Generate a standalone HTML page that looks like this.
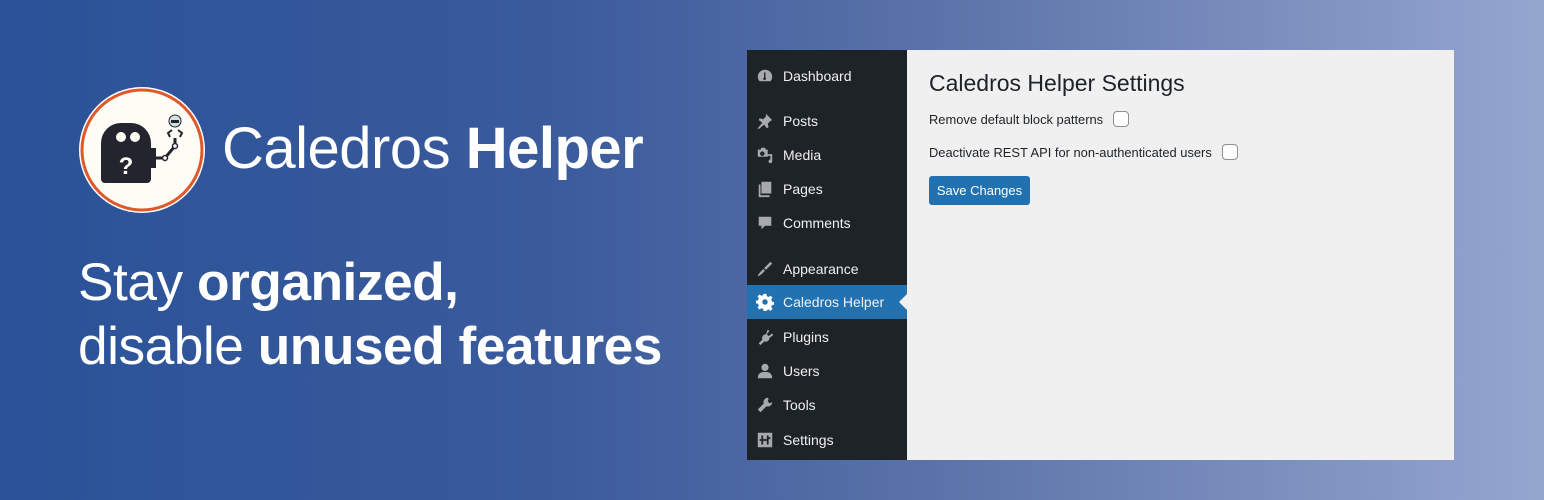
<!DOCTYPE html>
<html><head><meta charset="utf-8"><style>
*{margin:0;padding:0;box-sizing:border-box}
body{width:1544px;height:500px;overflow:hidden;font-family:"Liberation Sans",sans-serif;background:linear-gradient(90deg,#2a5298 0%,#3a5a9c 35%,#5a72a8 60%,#95a6cf 100%);position:relative;color:#fff}
.abs{position:absolute}
.title{left:222px;top:115px;font-size:58px;font-weight:300;letter-spacing:-0.5px;white-space:nowrap}
.tag{left:78px;top:251px;font-size:53.3px;line-height:64px;font-weight:300;letter-spacing:-0.5px;white-space:nowrap}
b{font-weight:700}
.wp{left:747px;top:50px;width:707px;height:410px;background:#f0f0f1}
.side{position:absolute;left:0;top:0;width:160px;height:410px;background:#1d2327}
.item{position:absolute;left:0;width:160px;height:34px;font-family:"Liberation Sans",sans-serif;font-size:14px;color:#f0f0f1;line-height:34px;padding-left:36px}
.item svg{position:absolute;left:9px;top:8px;width:18px;height:18px;fill:#a7aaad}
.act{background:#2271b1}
.act svg{fill:#fff}
.act:after{content:"";position:absolute;right:0;top:9px;border:8px solid transparent;border-right-color:#f0f0f1}
.main{position:absolute;left:182px;top:0;color:#1d2327}
h1{font-size:23px;font-weight:400;position:absolute;top:20px;left:0;white-space:nowrap}
.row{position:absolute;left:0;font-size:12.9px;white-space:nowrap;display:flex;align-items:center}
.cb{width:16px;height:16px;border:1px solid #8c8f94;border-radius:4px;background:#fff;margin-left:10px}
.btn{position:absolute;left:0;top:126px;width:101px;height:29px;background:#2271b1;border-radius:3px;color:#fff;font-size:13px;text-align:center;line-height:29px}
</style></head><body>
<svg class="abs" style="left:77px;top:85px" width="130" height="130" viewBox="0 0 130 130">
<circle cx="65" cy="65" r="63" fill="#fff"/>
<circle cx="65" cy="65" r="60" fill="#fdfdf6" stroke="#e0572a" stroke-width="3"/>
<path d="M24 70 V58 a20 20 0 0 1 20 -20 h10 a20 20 0 0 1 20 20 V70 Z" fill="#23242e"/>
<circle cx="44" cy="52" r="5" fill="#fdfdf6"/><circle cx="58" cy="52" r="5" fill="#fdfdf6"/>
<path d="M24 62 h50 v32 a4 4 0 0 1 -4 4 h-42 a4 4 0 0 1 -4 -4 Z" fill="#23242e"/>
<text x="49" y="89" font-size="24" font-weight="700" fill="#fdfdf6" text-anchor="middle" font-family="Liberation Sans">?</text>
<rect x="74" y="63" width="5" height="20" fill="#23242e"/>
<path d="M79 73 h9 l10 -12 v-8" stroke="#23242e" stroke-width="3" fill="none"/>
<circle cx="88" cy="73" r="2.5" fill="#fff" stroke="#23242e" stroke-width="1.5"/>
<circle cx="98" cy="61" r="2.5" fill="#fff" stroke="#23242e" stroke-width="1.5"/>
<path d="M93 52 l-2 -4 l4 -3 M103 52 l2 -4 l-4 -3" stroke="#23242e" stroke-width="2" fill="none"/>
<circle cx="98" cy="36" r="6" fill="#cfe3dc" stroke="#23242e" stroke-width="1"/>
<rect x="94" y="35" width="8" height="3" fill="#23242e"/>
</svg>
<div class="abs title">Caledros <b>Helper</b></div>
<div class="abs tag">Stay <b>organized,</b><br>disable <b>unused features</b></div>
<div class="abs wp">
<div class="side">
<div class="item" style="top:9px"><svg viewBox="0 0 20 20"><path d="M10 3a8 8 0 0 0-8 8c0 2 .8 3.6 2 4.8h12c1.2-1.2 2-2.8 2-4.8a8 8 0 0 0-8-8zm1 10a1.5 1.5 0 1 1-2-1.4V6h1.5v5.6A1.5 1.5 0 0 1 11 13z"/></svg>Dashboard</div>
<div class="item" style="top:54px"><svg viewBox="0 0 20 20"><path d="M11 2l7 7-2 1-3 3 1 4-2 1-3-4-6 5-1-1 5-6-4-3 1-2 4 1 3-3z"/></svg>Posts</div>
<div class="item" style="top:88px"><svg viewBox="0 0 20 20"><path d="M2 4h3l1-2h4l1 2h2v8H2zM7 6a2.5 2.5 0 1 0 .01 0zM13 9h5v8a2 2 0 1 1-2-2V11h-3z"/></svg>Media</div>
<div class="item" style="top:122px"><svg viewBox="0 0 20 20"><path d="M6 2h11v13H6zM3 5h2v12h10v2H3z"/></svg>Pages</div>
<div class="item" style="top:156px"><svg viewBox="0 0 20 20"><path d="M3 3h14v10H10l-4 4v-4H3z"/></svg>Comments</div>
<div class="item" style="top:202px"><svg viewBox="0 0 20 20"><path d="M16 2l2 2-7 7-2-2zM8 10l2 2-3 3-4 3-1-1 3-4z"/></svg>Appearance</div>
<div class="item act" style="top:235px"><svg viewBox="0 0 20 20"><path d="M8.5 1h3l.5 2.5 2 1 2.2-1.4 2.1 2.1L16.9 7.4l.8 2 2.3.6v3l-2.3.5-.8 2 1.4 2.2-2.1 2.1-2.2-1.4-2 .8L11.5 20h-3l-.5-2.3-2-.8-2.2 1.4-2.1-2.1 1.4-2.2-.8-2L0 11.5v-3l2.3-.5.8-2L1.7 3.8l2.1-2.1L6 3.1l2-.8zM10 7a3 3 0 1 0 .01 0z"/></svg>Caledros Helper</div>
<div class="item" style="top:270px"><svg viewBox="0 0 20 20"><path d="M13 2l2 1-3 4 2 2 4-3 1 2-4 3c0 3-3 5-6 4l-4 4-2-2 4-4c-1-3 1-6 4-6z"/></svg>Plugins</div>
<div class="item" style="top:304px"><svg viewBox="0 0 20 20"><circle cx="10" cy="6" r="4"/><path d="M2 18c0-5 3-7 8-7s8 2 8 7z"/></svg>Users</div>
<div class="item" style="top:338px"><svg viewBox="0 0 20 20"><path d="M13 2a5 5 0 0 0-4.5 6.5L2 15l3 3 6.5-6.5A5 5 0 0 0 18 7l-3 1-2-2 1-3z"/></svg>Tools</div>
<div class="item" style="top:373px"><svg viewBox="0 0 20 20"><path d="M2 2h16v16H2zm4 3v4H4v2h2v4h2v-4h2V9H8V5zm6 0v4h-2v2h2v4h2V9h2V7h-2V5z"/></svg>Settings</div>
</div>
<div class="main">
<h1>Caledros Helper Settings</h1>
<div class="row" style="top:61px">Remove default block patterns<span class="cb"></span></div>
<div class="row" style="top:94px">Deactivate REST API for non-authenticated users<span class="cb"></span></div>
<div class="btn">Save Changes</div>
</div>
</div>
</body></html>
